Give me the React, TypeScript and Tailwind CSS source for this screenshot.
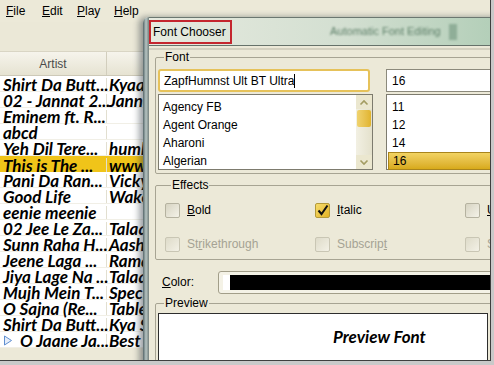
import React from "react";

const rows = [
  ["Shirt Da Butt...", "Kyaa Super Kool"],
  ["02 - Jannat 2...", "Jannat 2"],
  ["Eminem ft. R...", ""],
  ["abcd", ""],
  ["Yeh Dil Tere...", "humko pyaar"],
  ["This is The ...", "www.songs"],
  ["Pani Da Ran...", "Vicky Donor"],
  ["Good Life", "Wake Up Sid"],
  ["eenie meenie", ""],
  ["02 Jee Le Za...", "Talaash"],
  ["Sunn Raha H...", "Aashiqui 2"],
  ["Jeene Laga ...", "Ramaiya"],
  ["Jiya Lage Na ...", "Talaash"],
  ["Mujh Mein T...", "Special 26"],
  ["O Sajna (Re...", "Table No. 21"],
  ["Shirt Da Butt...", "Kya Super"],
  ["O Jaane Ja...", "Best of"],
];

const fonts = ["Agency FB", "Agent Orange", "Aharoni", "Algerian"];
const sizes = ["11", "12", "14", "16"];

const uiFont = { fontFamily: '"Liberation Sans", Arial, sans-serif' };
const songFont = { fontFamily: 'Lato, "Open Sans", sans-serif' };

function Check({ checked, disabled }: { checked?: boolean; disabled?: boolean }) {
  if (checked) {
    return (
      <span className="w-[15px] h-[15px] shrink-0 rounded-[2px] border border-[#b49a3a] bg-gradient-to-br from-[#f6dc6a] to-[#e3b420] flex items-center justify-center">
        <svg width="13" height="13" viewBox="0 0 13 13">
          <path d="M2.5 6.5 L5.5 10 L11.5 1.5" stroke="#111" strokeWidth="2" fill="none" />
        </svg>
      </span>
    );
  }
  return (
    <span
      className={
        disabled
          ? "w-[15px] h-[15px] shrink-0 rounded-[2px] border border-[#c9c6b4] bg-gradient-to-br from-[#dedbc9] to-[#f3f1e6]"
          : "w-[15px] h-[15px] shrink-0 rounded-[2px] border border-[#b5b2a0] bg-gradient-to-br from-[#d7d4c2] to-[#f4f2e8]"
      }
    />
  );
}

function Effect({ label, u, checked, disabled }: { label: string; u: number; checked?: boolean; disabled?: boolean }) {
  return (
    <div className="w-[150px] shrink-0 flex items-center gap-[7px]">
      <Check checked={checked} disabled={disabled} />
      <span className={disabled ? "text-[#a5a394] whitespace-nowrap" : "text-black whitespace-nowrap"}>
        {label.slice(0, u)}
        <span className="underline">{label[u]}</span>
        {label.slice(u + 1)}
      </span>
    </div>
  );
}

export default function App() {
  return (
    <div className="w-[494px] h-[365px] bg-[#c9c9c9] overflow-hidden" style={uiFont}>
      <div className="relative w-[491px] h-[361px] overflow-hidden bg-[#ece9d8] border-r border-b border-[#3f3f3f]">
        {/* main player window */}
        <div className="flex flex-col text-[12px]">
          <div className="h-[22px] flex items-center pl-[6px]">
            <span className="w-[36px]"><span className="underline">F</span>ile</span>
            <span className="w-[35px]"><span className="underline">E</span>dit</span>
            <span className="w-[37px]"><span className="underline">P</span>lay</span>
            <span><span className="underline">H</span>elp</span>
          </div>
          <div className="h-[30px] bg-[#ebe8d7] border-b border-[#d9d5c4]" />
          <div className="h-[24px] flex bg-gradient-to-b from-[#f6f4ec] to-[#e6e3d2] border-b border-[#cdc9b8] text-[#4a4a4a]">
            <div className="w-[107px] border-r border-[#d2cebd] flex items-center justify-center">Artist</div>
            <div className="flex-1" />
          </div>
          <div className="bg-white">
            {rows.map(([a, b], i) => (
              <div
                key={i}
                className={
                  i === 5
                    ? "h-[16px] pt-[2px] flex items-center bg-[#f0c419] text-[17px] font-bold italic leading-none text-black"
                    : "h-[16px] pt-[2px] flex items-center border-b border-[#f1efe6] text-[17px] font-bold italic leading-none text-black"
                }
                style={songFont}
              >
                <div className="w-[107px] shrink-0 pl-[3px] border-r border-[#e2dfd0] h-full flex items-center whitespace-nowrap">
                  {i === 16 && (
                    <svg width="10" height="11" viewBox="0 0 10 11" className="mr-[7px] shrink-0">
                      <path d="M1.5 1 L8.5 5.5 L1.5 10 Z" fill="#e6eefa" stroke="#5f8fd0" strokeWidth="1" />
                    </svg>
                  )}
                  {a}
                </div>
                <div className="pl-[2px] whitespace-nowrap">{b}</div>
              </div>
            ))}
          </div>
        </div>

        {/* font chooser dialog */}
        <div className="absolute left-[143px] top-[17px] w-[400px] h-[350px] flex rounded-tl-[6px] overflow-hidden shadow-[-4px_0_6px_rgba(40,50,60,0.45)] text-[12px] text-black">
          <div className="w-[6px] shrink-0 bg-gradient-to-r from-[#56676a] via-[#b7c5c3] to-[#75817e]" />
          <div className="flex-1 min-w-0 flex flex-col bg-[#ece9d8]">
            <div className="h-[28px] shrink-0 flex items-stretch border-t border-[#6b7770] bg-gradient-to-r from-[#e6eadf] via-[#d3dfd1] to-[#a8c9b0]">
              <div className="w-[83px] mt-[2px] mb-[1px] border-2 border-[#c4262e] flex items-center pl-[2px] whitespace-nowrap">Font Chooser</div>
              <div className="flex-1 flex items-center pl-[98px]">
                <span className="text-[#5d7f68] blur-[1.2px] text-[11px] whitespace-nowrap">Automatic Font Editing</span>
                <span className="ml-[8px] w-[8px] h-[16px] bg-[#8fae98] blur-[1px]" />
              </div>
            </div>
            <div className="h-[5px] shrink-0 border-t border-[#66726a] border-b-2 border-b-[#d3d0bf]" />

            <div className="pl-[6px] flex flex-col">
              <fieldset className="border border-[#a7a493] rounded-[2px] pl-[2px] pb-[3px]">
                <legend className="ml-[6px] px-[1px] leading-[14px]">Font</legend>
                <div className="flex gap-[13px] mt-[5px]">
                  <div className="flex flex-col gap-[2px] shrink-0">
                    <div className="w-[212px] h-[23px] rounded-[3px] border-2 border-[#e6c25a] bg-white flex items-center pl-[4px] whitespace-nowrap">
                      ZapfHumnst Ult BT Ultra<span className="w-px h-[14px] bg-black" />
                    </div>
                    <div className="w-[215px] h-[76px] flex border border-[#7d7b6e] bg-white">
                      <div className="flex-1 pt-[3px] pl-[4px] flex flex-col">
                        {fonts.map((f) => (
                          <div key={f} className="h-[18px] flex items-center">{f}</div>
                        ))}
                      </div>
                      <div className="w-[16px] flex flex-col bg-gradient-to-r from-[#f2f0e3] to-[#e4e1cc]">
                        <div className="h-[14px] flex items-center justify-center bg-[#ebe7cf]">
                          <svg width="10" height="7" viewBox="0 0 10 7">
                            <path d="M1.5 5.5 L5 2 L8.5 5.5" stroke="#a39c62" strokeWidth="1.6" fill="none" />
                          </svg>
                        </div>
                        <div className="h-[17px] mx-px mt-px rounded-[2px] bg-gradient-to-r from-[#f0d36e] to-[#e1b42c]" />
                        <div className="flex-1" />
                        <div className="h-[14px] flex items-center justify-center bg-[#ebe7cf]">
                          <svg width="10" height="7" viewBox="0 0 10 7">
                            <path d="M1.5 1.5 L5 5 L8.5 1.5" stroke="#a39c62" strokeWidth="1.6" fill="none" />
                          </svg>
                        </div>
                      </div>
                    </div>
                  </div>
                  <div className="flex flex-col gap-[2px] shrink-0">
                    <div className="w-[120px] h-[23px] border border-[#8c8a7c] bg-white flex items-center pl-[5px]">16</div>
                    <div className="w-[120px] h-[76px] border border-[#7d7b6e] bg-white pt-[3px] pl-[1px] flex flex-col">
                      {sizes.map((s) => (
                        <div
                          key={s}
                          className={
                            s === "16"
                              ? "h-[18px] flex items-center pl-[4px] bg-gradient-to-b from-[#f2d362] to-[#d8aa18] border border-[#a9841c]"
                              : "h-[18px] flex items-center pl-[4px]"
                          }
                        >
                          {s}
                        </div>
                      ))}
                    </div>
                  </div>
                </div>
              </fieldset>

              <fieldset className="mt-[4px] border border-[#a7a493] rounded-[2px] pl-[9px] h-[82px]">
                <legend className="ml-[6px] px-[1px] leading-[14px]">Effects</legend>
                <div className="flex mt-[9px]">
                  <Effect label="Bold" u={0} />
                  <Effect label="Italic" u={0} checked />
                  <Effect label="Underline" u={0} />
                </div>
                <div className="flex mt-[16px]">
                  <Effect label="Strikethrough" u={2} disabled />
                  <Effect label="Subscript" u={8} disabled />
                  <Effect label="Superscript" u={1} disabled />
                </div>
              </fieldset>

              <div className="flex items-center mt-[10px] h-[24px]">
                <span className="w-[63px] shrink-0 pl-[7px]"><span className="underline">C</span>olor:</span>
                <div className="flex-1 h-[23px] rounded-[3px] border border-[#a29e89] bg-[#f4f2e6] flex items-center pl-[4px] pr-[2px]">
                  <div className="h-[15px] flex-1 bg-white pl-[7px] flex">
                    <div className="flex-1 bg-black" />
                  </div>
                </div>
              </div>

              <fieldset className="mt-[2px] border border-[#a7a493] rounded-[2px] pl-[2px] h-[80px]">
                <legend className="ml-[6px] px-[1px] leading-[14px]">Preview</legend>
                <div
                  className="w-[330px] h-[48px] mt-[3px] border border-[#2d2d2d] bg-white flex items-center pl-[174px] text-[17px] font-bold italic whitespace-nowrap"
                  style={songFont}
                >
                  Preview Font
                </div>
              </fieldset>
            </div>
          </div>
        </div>
      </div>
    </div>
  );
}
